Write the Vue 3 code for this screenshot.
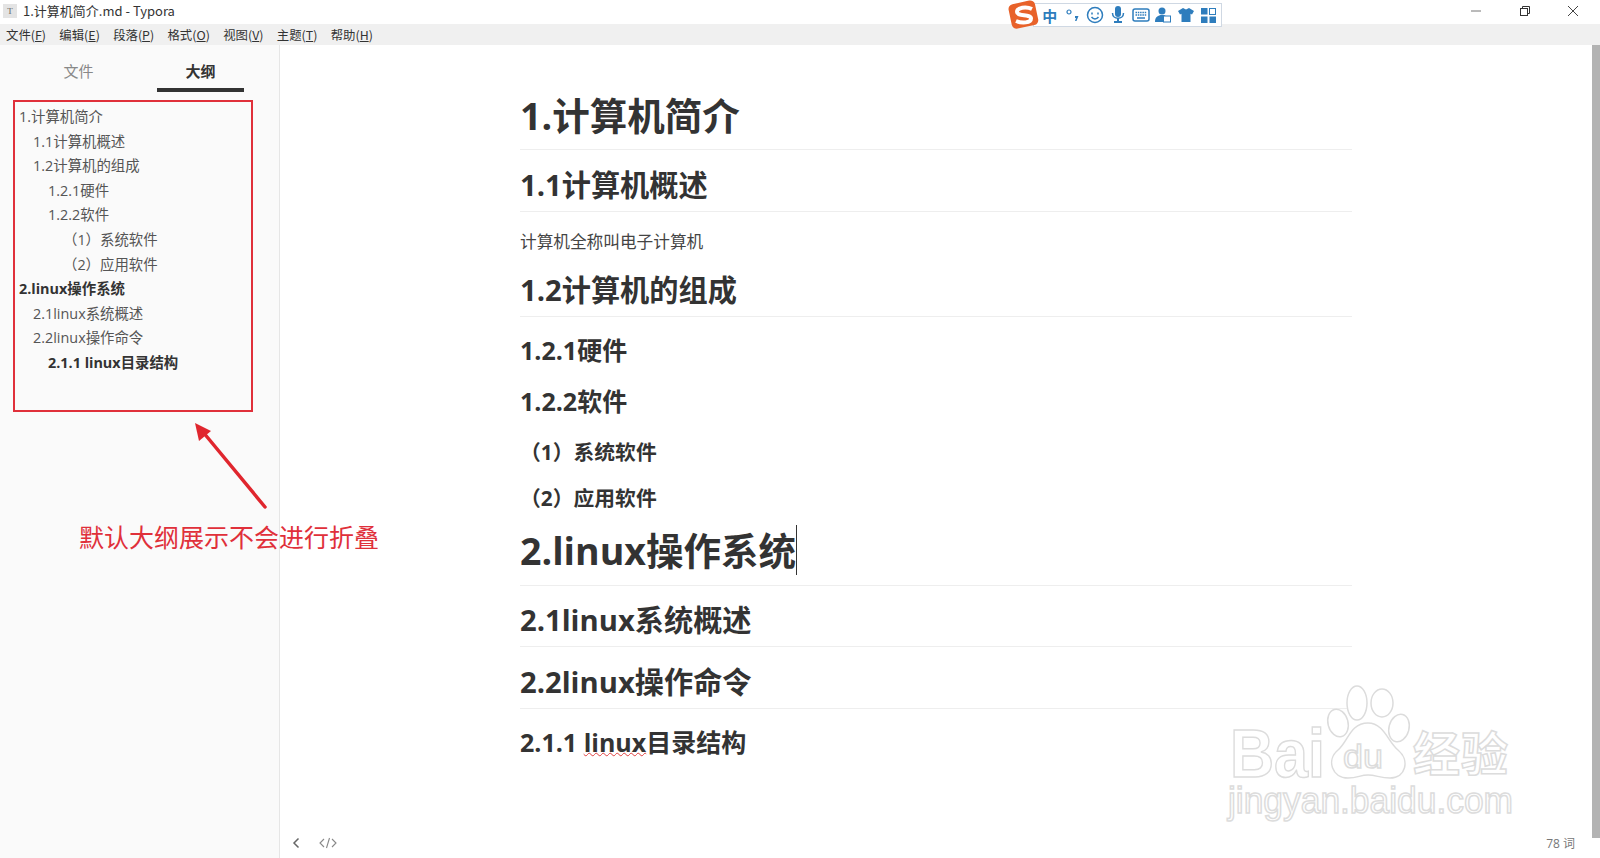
<script setup>
const menus = [['文件','F'],['编辑','E'],['段落','P'],['格式','O'],['视图','V'],['主题','T'],['帮助','H']]
const outline = [
  { t: '1.计算机简介', l: 0 },
  { t: '1.1计算机概述', l: 1 },
  { t: '1.2计算机的组成', l: 1 },
  { t: '1.2.1硬件', l: 2 },
  { t: '1.2.2软件', l: 2 },
  { t: '（1）系统软件', l: 3 },
  { t: '（2）应用软件', l: 3 },
  { t: '2.linux操作系统', l: 0, b: true },
  { t: '2.1linux系统概述', l: 1 },
  { t: '2.2linux操作命令', l: 1 },
  { t: '2.1.1 linux目录结构', l: 2, b: true }
]
</script>

<template>
  <div class="app">
    <header class="titlebar">
      <span class="doc-icon">T</span>
      <span class="title">1.计算机简介.md - Typora</span>
      <div class="win">
        <svg width="12" height="12" viewBox="0 0 12 12"><path d="M1 6h10" stroke="#777" stroke-width="1"/></svg>
        <svg width="12" height="12" viewBox="0 0 12 12" fill="none" stroke="#333"><rect x="1.5" y="3.5" width="7" height="7"/><path d="M3.5 3.5v-2h7v7h-2"/></svg>
        <svg width="12" height="12" viewBox="0 0 12 12"><path d="M1 1l10 10M11 1L1 11" stroke="#444" stroke-width="1"/></svg>
      </div>
    </header>
    <nav class="menubar">
      <span v-for="m in menus" :key="m[0]" class="menu">{{ m[0] }}(<u>{{ m[1] }}</u>)</span>
    </nav>
    <div class="body">
      <aside class="sidebar">
        <div class="tabs">
          <div class="tab">文件</div>
          <div class="tab active">大纲</div>
        </div>
        <ul class="outline">
          <li v-for="o in outline" :key="o.t" :class="['lv' + o.l, { bold: o.b }]">{{ o.t }}</li>
        </ul>
      </aside>
      <main class="editor">
        <article class="doc">
          <h1 class="first">1.计算机简介</h1>
          <h2>1.1计算机概述</h2>
          <p>计算机全称叫电子计算机</p>
          <h2>1.2计算机的组成</h2>
          <h3>1.2.1硬件</h3>
          <h3>1.2.2软件</h3>
          <h4>（1）系统软件</h4>
          <h4>（2）应用软件</h4>
          <h1 class="second">2.linux操作系统<span class="caret"></span></h1>
          <h2 class="after-second">2.1linux系统概述</h2>
          <h2>2.2linux操作命令</h2>
          <h3 class="last">2.1.1 <span class="spell">linux</span>目录结构</h3>
        </article>
        <footer class="status">
          <svg width="10" height="12" viewBox="0 0 10 12" fill="none" stroke="#666" stroke-width="1.5"><path d="M7.5 1.5L3 6l4.500 4.500"/></svg>
          <svg class="code" width="18" height="12" viewBox="0 0 18 12" fill="none" stroke="#888" stroke-width="1.1"><path d="M5 2L1 6l4 4M13 2l4 4-4 4M10.500 1l-3 10"/></svg>
          <span class="count">78 词</span>
        </footer>
        <div class="scroll"></div>
      </main>
    </div>

    <div class="ime">
      <svg class="ime-s" width="32" height="30" viewBox="0 0 32 30">
        <rect x="2" y="2" width="27" height="25" rx="5" fill="#e8622a" transform="rotate(-12 16 15)"/>
        <path d="M24 9C18 6 9 7.500 9 12c0 4.500 14 2 14 6.500 0 4.500-9 5-15 2.500" fill="none" stroke="#fff" stroke-width="4"/>
      </svg>
      <span class="slot zh">中</span>
      <span class="slot"><svg width="16" height="16" viewBox="0 0 16 16" fill="#2e7dbd"><circle cx="4" cy="5" r="2" fill="none" stroke="#2e7dbd" stroke-width="1.2"/><path d="M10 9h3.500l-2 5h-1.500l1-3h-1z"/></svg></span>
      <span class="slot"><svg width="18" height="18" viewBox="0 0 18 18" fill="none" stroke="#2e7dbd" stroke-width="1.5"><circle cx="9" cy="9" r="7.500"/><path d="M6 6.500v2M12 6.500v2M5.500 11c2 2.500 5 2.500 7 0"/></svg></span>
      <span class="slot"><svg width="14" height="18" viewBox="0 0 14 18" fill="#2e7dbd"><rect x="4" y="0" width="6" height="11" rx="3"/><path d="M1.500 7c0 7 11 7 11 0" fill="none" stroke="#2e7dbd" stroke-width="1.500"/><path d="M6 12h2v3h3v2H3v-2h3z"/></svg></span>
      <span class="slot"><svg width="18" height="14" viewBox="0 0 18 14"><rect x="1" y="1" width="16" height="12" rx="2" fill="#fff" stroke="#2e7dbd" stroke-width="1.500"/><path d="M3.500 4.500h11M3.500 7h11" stroke="#2e7dbd" stroke-width="1.500" stroke-dasharray="1.500 .8"/><path d="M5 10h8" stroke="#2e7dbd" stroke-width="1.500"/></svg></span>
      <span class="slot"><svg width="16" height="16" viewBox="0 0 16 16" fill="#2e7dbd"><circle cx="7" cy="4" r="3.500"/><path d="M0 15c0-5 3-7 7-7s3.500 1 3.500 1v6z"/><rect x="8.500" y="9" width="7" height="6" fill="#fff" stroke="#2e7dbd"/></svg></span>
      <span class="slot"><svg width="16" height="16" viewBox="0 0 16 16" fill="#2e7dbd"><path d="M5 1l3 1.500L11 1l5 3-2 3.500-1.500-.8V15h-9V6.700L2 7.500 0 4z"/></svg></span>
      <span class="slot"><svg width="15" height="15" viewBox="0 0 15 15" fill="#2e7dbd"><rect x="0" y="0" width="6.500" height="6.500"/><rect x="8.500" y="0.500" width="6" height="6" fill="#fff" stroke="#2e7dbd"/><rect x="0" y="8.500" width="6.500" height="6.500"/><rect x="8.500" y="8.500" width="6.500" height="6.500"/></svg></span>
    </div>

    <div class="red-box"></div>
    <svg class="arrow" width="80" height="92" viewBox="0 0 80 92">
      <path d="M75 87L13 12" stroke="#e0262e" stroke-width="3.5" stroke-linecap="round"/>
      <path d="M5 3L21 11 9 21z" fill="#e0262e"/>
    </svg>
    <div class="note">默认大纲展示不会进行折叠</div>

    <svg class="watermark" width="300" height="150" viewBox="0 0 300 150">
      <g fill="#fff" stroke="#dcdcdc" stroke-width="1.5">
        <text class="wm-bai" x="10" y="97" textLength="95" lengthAdjust="spacingAndGlyphs">Bai</text>
        <ellipse cx="118" cy="43" rx="10" ry="14" transform="rotate(-15 118 43)"/>
        <ellipse cx="137" cy="23" rx="10" ry="17"/>
        <ellipse cx="162" cy="23" rx="11" ry="14"/>
        <ellipse cx="179" cy="48" rx="10" ry="14" transform="rotate(15 179 48)"/>
        <path d="M148 43C130 43 128 62 118 70C106 80 112 98 128 98C138 98 140 95 148 95C156 95 160 98 170 98C186 98 190 80 178 70C168 62 164 43 148 43Z"/>
        <text class="wm-du" x="123" y="88" textLength="40" lengthAdjust="spacingAndGlyphs">du</text>
        <text class="wm-jy" x="193" y="91" textLength="95">经验</text>
        <text class="wm-url" x="8" y="133" textLength="285" lengthAdjust="spacingAndGlyphs">jingyan.baidu.com</text>
      </g>
    </svg>
  </div>
</template>

<style>
html, body { margin: 0; padding: 0; background: #fff; overflow: hidden; }
</style>

<style scoped>
.app {
  position: relative;
  width: 1600px;
  height: 858px;
  overflow: hidden;
  display: flex;
  flex-direction: column;
  font-family: "Open Sans", "Noto Sans CJK SC", sans-serif;
  color: #333;
  background: #fff;
}
.titlebar {
  height: 24px;
  box-sizing: border-box;
  padding: 0 0 3px 3px;
  display: flex;
  align-items: center;
  flex: none;
  font-size: 13px;
  color: #333;
}
.doc-icon {
  width: 14px;
  height: 14px;
  background: #e4e4e4;
  color: #666;
  font: 9px/14px "Liberation Serif", serif;
  text-align: center;
  margin-right: 6px;
}
.title { font-family: "Noto Sans CJK SC", sans-serif; }
.win {
  margin-left: auto;
  display: flex;
  gap: 36.5px;
  padding-right: 21px;
  align-items: center;
}
.menubar {
  height: 21px;
  flex: none;
  background: #f0f0f0;
  display: flex;
  align-items: center;
  gap: 13.3px;
  padding-left: 6px;
  font: 12.4px "Noto Sans CJK SC", sans-serif;
  color: #333;
}
.menu u { text-underline-offset: 1px; }
.body { flex: 1; display: flex; min-height: 0; }
.sidebar {
  width: 279px;
  flex: none;
  background: #fafafa;
  border-right: 1px solid #e6e6e6;
}
.tabs {
  display: flex;
  height: 47px;
  padding-left: 35px;
}
.tab {
  width: 87px;
  margin-right: 35px;
  text-align: center;
  font-size: 15px;
  line-height: 53px;
  color: #888;
}
.tab.active {
  color: #333;
  font-weight: 700;
  border-bottom: 4px solid #333;
  height: 43px;
  margin-right: 0;
}
.outline {
  list-style: none;
  margin: 0;
  padding: 13px 0 0 19px;
  font-size: 14.4px;
  line-height: 24.6px;
  color: #555;
}
.outline li { white-space: nowrap; }
.outline .lv1 { padding-left: 14px; }
.outline .lv2 { padding-left: 29px; }
.outline .lv3 { padding-left: 44px; }
.outline .bold { font-weight: 700; color: #333; }
.editor { flex: 1; position: relative; min-width: 0; }
.doc { width: 832px; margin-left: 240px; }
h1, h2, h3, h4, p { margin: 0; color: #333; }
h1 {
  font-size: 37.5px;
  line-height: 48px;
  padding: 13px 0 10px;
  border-bottom: 1px solid #eee;
  font-weight: 700;
}
h1.first { padding: 47px 0 9px; }
h2 {
  font-size: 29.2px;
  line-height: 36px;
  padding: 17px 0 8px;
  border-bottom: 1px solid #eee;
  font-weight: 700;
}
h2.after-second { padding: 16px 0 8px; }
p { font-size: 16.67px; line-height: 26px; padding-top: 17px; color: #444; }
h3 { font-size: 25px; line-height: 32px; padding-top: 19px; font-weight: 700; }
h2 + h3 { padding-top: 17px; }
h3.last { padding-top: 17px; }
h4 { font-size: 20.8px; line-height: 28px; padding-top: 18px; font-weight: 700; }
h3 + h4 { padding-top: 21px; }
.caret {
  display: inline-block;
  width: 1px;
  height: 50px;
  background: #333;
  vertical-align: -10px;
}
.spell { text-decoration: underline wavy #e04040 1px; text-underline-offset: 0; }
.status {
  position: absolute;
  left: 11px;
  right: 25px;
  bottom: 0;
  height: 30px;
  display: flex;
  align-items: center;
  color: #777;
  font-size: 12px;
}
.code { margin-left: 18px; }
.count { margin-left: auto; }
.scroll {
  position: absolute;
  right: 0;
  top: 0;
  width: 8px;
  height: 793px;
  background: #b3b3b3;
}
.ime {
  position: absolute;
  left: 1033px;
  top: 3px;
  width: 189px;
  height: 24px;
  box-sizing: border-box;
  background: #fff;
  border: 1px solid #cfd8e3;
  display: flex;
  align-items: center;
  padding-left: 4.500px;
}
.slot {
  flex: none;
  width: 22.7px;
  display: flex;
  justify-content: center;
  align-items: center;
}
.zh { font: 700 15px "Noto Sans CJK SC", sans-serif; color: #2e7dbd; }
.ime-s { position: absolute; left: -26px; top: -4px; }
.red-box {
  position: absolute;
  left: 13px;
  top: 100px;
  width: 240px;
  height: 312px;
  box-sizing: border-box;
  border: 2px solid #e0303a;
}
.arrow { position: absolute; left: 190px; top: 420px; }
.note {
  position: absolute;
  left: 79px;
  top: 518px;
  font: 25px/36px "Noto Sans CJK SC", sans-serif;
  color: #e0303a;
  white-space: nowrap;
}
.watermark { position: absolute; left: 1220px; top: 680px; }
.wm-bai { font: 700 68px "Liberation Sans", sans-serif; }
.wm-du { font: 400 34px "Liberation Sans", sans-serif; }
.wm-jy { font: 700 47px "Noto Sans CJK SC", sans-serif; }
.wm-url { font: 400 36px "Liberation Sans", sans-serif; }
</style>
